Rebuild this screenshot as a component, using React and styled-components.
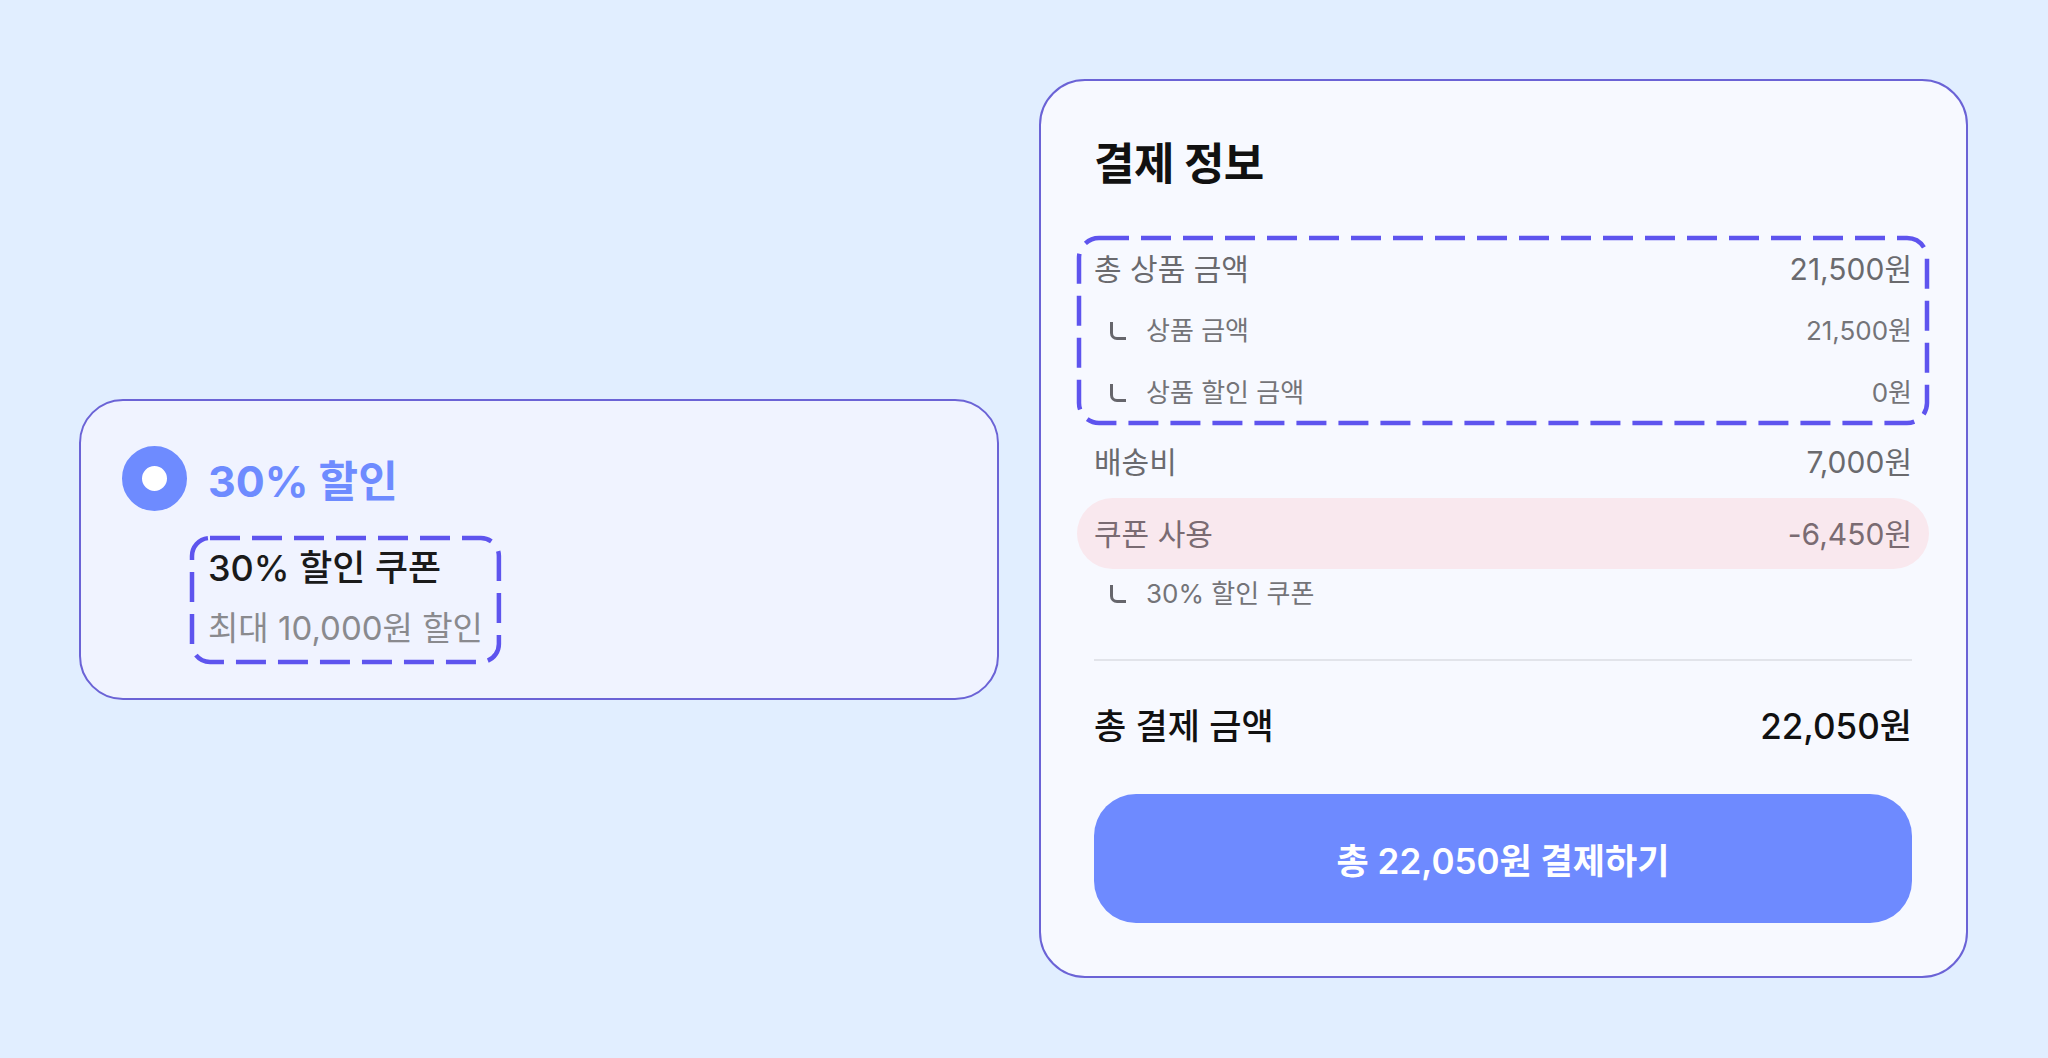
import styled, { createGlobalStyle } from "styled-components";

const GlobalStyle = createGlobalStyle`
  html, body {
    margin: 0;
    padding: 0;
    background: #e1eeff;
  }
  body {
    font-family: Inter, "Noto Sans CJK KR", sans-serif;
    color: #111;
  }
`;

const Page = styled.div`
  width: 2048px;
  height: 1058px;
  box-sizing: border-box;
  padding: 79px 0 0 79px;
  display: flex;
  align-items: flex-start;
  gap: 40px;
`;

const CouponCard = styled.div`
  box-sizing: border-box;
  width: 920px;
  height: 301px;
  margin-top: 320px;
  padding: 44px 41px 0;
  background: #f0f3ff;
  border: 2px solid #6b63d6;
  border-radius: 44px;
  display: flex;
  flex-direction: column;
`;

const CouponHead = styled.div`
  display: flex;
  align-items: center;
  gap: 21px;
  height: 66px;
`;

const Radio = styled.span`
  box-sizing: border-box;
  width: 65px;
  height: 65px;
  border-radius: 50%;
  border: 20px solid #6e8bff;
  background: #fff;
  flex-shrink: 0;
`;

const CouponName = styled.span`
  font-size: 43px;
  font-weight: 700;
  color: #6e8bff;
`;

const Frame = styled.div`
  position: relative;
  align-self: ${(p) => (p.$fit ? "flex-start" : "stretch")};
  margin: ${(p) => p.$margin || "0"};
  padding: ${(p) => p.$pad || "0"};
`;

const FrameLine = styled.svg`
  position: absolute;
  inset: 2px;
  width: calc(100% - 4px);
  height: calc(100% - 4px);
  overflow: visible;
  pointer-events: none;
`;

function Dashed({ children, radius = 18, ...rest }) {
  return (
    <Frame {...rest}>
      {children}
      <FrameLine>
        <rect
          x="0"
          y="0"
          width="100%"
          height="100%"
          rx={radius}
          fill="none"
          stroke="#5e54ee"
          strokeWidth="4.5"
          strokeDasharray="30 12"
        />
      </FrameLine>
    </Frame>
  );
}

const CouponTitle = styled.div`
  font-size: 36px;
  font-weight: 500;
  color: #1a1a1a;
  line-height: 44px;
`;

const CouponDesc = styled.div`
  font-size: 33px;
  color: #8a8a8e;
  line-height: 40px;
  margin-top: 18px;
`;

const PayCard = styled.div`
  box-sizing: border-box;
  width: 929px;
  height: 899px;
  padding: 53px 54px 0 53px;
  background: #f7f9ff;
  border: 2px solid #6b63d6;
  border-radius: 46px;
  display: flex;
  flex-direction: column;
`;

const Title = styled.h2`
  margin: 0;
  font-size: 44px;
  font-weight: 700;
  line-height: 60px;
  letter-spacing: -0.5px;
  color: #111;
`;

const Row = styled.div`
  display: flex;
  align-items: center;
  justify-content: space-between;
  height: ${(p) => p.$h || 62}px;
  font-size: ${(p) => (p.$sub ? 26 : 30)}px;
  line-height: 1;
  color: ${(p) => (p.$sub ? "#747478" : "#6a6a6e")};
`;

const Label = styled.span`
  display: flex;
  align-items: center;
`;

const Corner = styled.span`
  display: inline-block;
  box-sizing: border-box;
  width: 16px;
  height: 18px;
  margin: 0 20px 0 16px;
  border-left: 3.5px solid #66666c;
  border-bottom: 3.5px solid #66666c;
  border-bottom-left-radius: 7px;
`;

const CouponRow = styled(Row)`
  margin: 0 -17px;
  padding: 0 17px;
  border-radius: 36px;
  background: #f9e8ee;
  color: #7a6b72;
`;

const Divider = styled.hr`
  margin: 40px 0 0;
  border: none;
  height: 2px;
  background: #e2e4ea;
`;

const TotalRow = styled(Row)`
  margin-top: 30px;
  height: 70px;
  font-size: 35px;
  font-weight: 500;
  color: #111;
`;

const PayButton = styled.button`
  margin-top: 33px;
  height: 129px;
  border: none;
  border-radius: 42px;
  background: #6e8aff;
  color: #fff;
  font-family: inherit;
  font-size: 35px;
  font-weight: 600;
  cursor: pointer;
`;

const items = [
  { label: "상품 금액", value: "21,500원" },
  { label: "상품 할인 금액", value: "0원" },
];

export default function App() {
  return (
    <>
      <GlobalStyle />
      <Page>
        <CouponCard>
          <CouponHead>
            <Radio />
            <CouponName>30% 할인</CouponName>
          </CouponHead>
          <Dashed $fit $margin="25px 0 0 68px" $pad="10px 18px 16px 18px">
            <CouponTitle>30% 할인 쿠폰</CouponTitle>
            <CouponDesc>최대 10,000원 할인</CouponDesc>
          </Dashed>
        </CouponCard>

        <PayCard>
          <Title>결제 정보</Title>
          <Dashed $margin="42px -17px 0" $pad="2px 17px 1px" radius={20}>
            <Row>
              <span>총 상품 금액</span>
              <span>21,500원</span>
            </Row>
            {items.map((it) => (
              <Row $sub key={it.label}>
                <Label>
                  <Corner />
                  {it.label}
                </Label>
                <span>{it.value}</span>
              </Row>
            ))}
          </Dashed>
          <Row $h={73}>
            <span>배송비</span>
            <span>7,000원</span>
          </Row>
          <CouponRow $h={71}>
            <span>쿠폰 사용</span>
            <span>-6,450원</span>
          </CouponRow>
          <Row $sub $h={50}>
            <Label>
              <Corner />
              30% 할인 쿠폰
            </Label>
          </Row>
          <Divider />
          <TotalRow>
            <span>총 결제 금액</span>
            <span>22,050원</span>
          </TotalRow>
          <PayButton>총 22,050원 결제하기</PayButton>
        </PayCard>
      </Page>
    </>
  );
}
